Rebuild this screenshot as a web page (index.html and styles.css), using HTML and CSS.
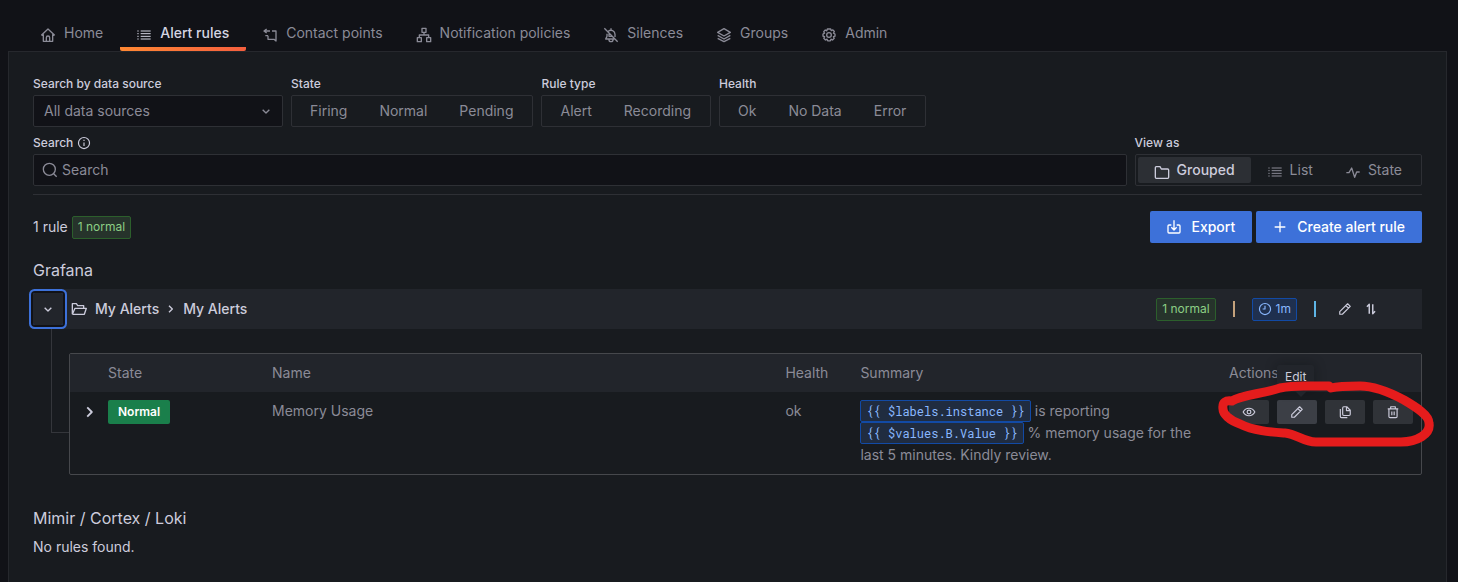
FILE: index.html
```html
<!DOCTYPE html>
<html lang="en">
<head>
<meta charset="utf-8">
<title>Alert rules</title>
<link rel="stylesheet" href="styles.css">
</head>
<body>
<svg class="sprite" aria-hidden="true">
  <symbol id="i-home" viewBox="0 0 24 24"><path d="M2 12.500 12 3l10 9.500M2 12.500h3M19 12.500h3M5 11v10.500h14V11M9.500 21v-5a2.500 2.500 0 0 1 5 0v5"/></symbol>
  <symbol id="i-list" viewBox="0 0 24 24"><path d="M7 6h15M7 10h15M7 14h15M7 18h15M2 6h2M2 10h2M2 14h2M2 18h2" stroke-width="1.500"/></symbol>
  <symbol id="i-contact" viewBox="0 0 24 24"><path d="M12 6H3M7 3 3 6l4 3M15 6h6v15l-3-2.500H9V13M5 13h4"/></symbol>
  <symbol id="i-tree" viewBox="0 0 24 24"><path d="M9 2h6v6H9zM2 16h6v6H2zM16 16h6v6h-6zM12 8v4M5 16v-4h14v4"/></symbol>
  <symbol id="i-silence" viewBox="0 0 24 24"><path d="M2 2l20 20M6 10v4l-2 4h13M8 6.500A6 6 0 0 1 18 11v4M12 2v3M9 19a3 3 0 0 0 6 0M9 9v5h5"/></symbol>
  <symbol id="i-layers" viewBox="0 0 24 24"><path d="M12 2.500 21.500 8 12 13.500 2.500 8zM2.500 12.500 12 18l9.500-5.500M2.500 17 12 22l9.500-5"/></symbol>
  <symbol id="i-gear" viewBox="0 0 24 24"><circle cx="12" cy="12" r="3.500"/><path d="M9.500 3h5l.8 2.500 2.500-1.200 2.200 2.500-1.300 2.500 2.300 1.200v3.200l-2.300.8 1.100 2.500-2.500 2.500-2.300-1.200-1 2.400h-4l-1-2.400-2.300 1.200-2.500-2.500 1.100-2.500-2.300-.8v-3.200l2.300-1.200-1.200-2.300 2.300-2.500 2.300 1.200z"/></symbol>
  <symbol id="i-down" viewBox="0 0 24 24"><path d="m7 10 5 5 5-5"/></symbol>
  <symbol id="i-right" viewBox="0 0 24 24"><path d="m9 7 5 5-5 5"/></symbol>
  <symbol id="i-info" viewBox="0 0 24 24"><circle cx="12" cy="12" r="9.500"/><path d="M12 11v6M12 6.500v2"/></symbol>
  <symbol id="i-search" viewBox="0 0 24 24"><circle cx="11" cy="11" r="9"/><path d="m17.500 17.500 4.500 4.500"/></symbol>
  <symbol id="i-folder" viewBox="0 0 24 24"><path d="M2 5.500A1.500 1.500 0 0 1 3.500 4H9l2 3.500h9.500A1.500 1.500 0 0 1 22 9v11a1.500 1.500 0 0 1-1.500 1.500h-17A1.500 1.500 0 0 1 2 20z"/></symbol>
  <symbol id="i-folder-open" viewBox="0 0 24 24"><path d="M2 20V4h6l2 3h9v3M2 20l4-9h17l-3 9H2"/></symbol>
  <symbol id="i-pulse" viewBox="0 0 24 24"><path d="M2 13h4l4-7 4.500 14L17.500 12H22"/></symbol>
  <symbol id="i-export" viewBox="0 0 24 24"><path d="M8 9H4.500A1.500 1.500 0 0 0 3 10.500v9A1.500 1.500 0 0 0 4.500 21h15a1.500 1.500 0 0 0 1.500-1.500v-9A1.500 1.500 0 0 0 19.500 9H16M12 2v14M8 12.500l4 4 4-4"/></symbol>
  <symbol id="i-plus" viewBox="0 0 24 24"><path d="M12 4v16M4 12h16"/></symbol>
  <symbol id="i-clock" viewBox="0 0 24 24"><circle cx="12" cy="12" r="9.500"/><path d="M12 6.500V12H8"/></symbol>
  <symbol id="i-pen" viewBox="0 0 24 24"><path d="M3 21v-4.500L16.500 3 21 7.500 7.500 21zM13.500 6l4.500 4.500"/></symbol>
  <symbol id="i-sort" viewBox="0 0 24 24"><path d="M9 20V4L5 8M15 4v16l4-4" stroke-width="2.500"/></symbol>
  <symbol id="i-eye" viewBox="0 0 24 24"><path d="M2 12c4.500-8.500 15.500-8.500 20 0-4.500 8.500-15.500 8.500-20 0z"/><circle cx="12" cy="12" r="3.200"/></symbol>
  <symbol id="i-copy" viewBox="0 0 24 24"><path d="M10 3h5l6 6v7a2 2 0 0 1-2 2h-9a2 2 0 0 1-2-2V5a2 2 0 0 1 2-2zM14.500 3v6.500H21M4 7v12.500a2 2 0 0 0 2 2h10"/></symbol>
  <symbol id="i-trash" viewBox="0 0 24 24"><path d="M3 6.500h18M8 6V3h8v3M5 7v12.500a2 2 0 0 0 2 2h10a2 2 0 0 0 2-2V7M10 11v6.500M14 11v6.500"/></symbol>
</svg>

<nav class="tabs" aria-label="Alerting">
  <a class="tab" href="#"><svg class="icon"><use href="#i-home"/></svg>Home</a>
  <a class="tab active" href="#" aria-current="page"><svg class="icon"><use href="#i-list"/></svg>Alert rules</a>
  <a class="tab" href="#"><svg class="icon"><use href="#i-contact"/></svg>Contact points</a>
  <a class="tab" href="#"><svg class="icon"><use href="#i-tree"/></svg>Notification policies</a>
  <a class="tab" href="#"><svg class="icon"><use href="#i-silence"/></svg>Silences</a>
  <a class="tab" href="#"><svg class="icon"><use href="#i-layers"/></svg>Groups</a>
  <a class="tab" href="#"><svg class="icon"><use href="#i-gear"/></svg>Admin</a>
</nav>

<main class="panel">
  <form class="filters">
    <div class="filter-row">
      <div class="field source">
        <label class="caption" for="source">Search by data source</label>
        <div class="select-box">
          <select id="source"><option>All data sources</option></select>
          <svg class="icon"><use href="#i-down"/></svg>
        </div>
      </div>
      <fieldset class="field">
        <legend class="caption">State</legend>
        <div class="radios">
          <label><input type="radio" name="state">Firing</label>
          <label><input type="radio" name="state">Normal</label>
          <label><input type="radio" name="state">Pending</label>
        </div>
      </fieldset>
      <fieldset class="field">
        <legend class="caption">Rule type</legend>
        <div class="radios">
          <label><input type="radio" name="type">Alert</label>
          <label><input type="radio" name="type">Recording</label>
        </div>
      </fieldset>
      <fieldset class="field">
        <legend class="caption">Health</legend>
        <div class="radios">
          <label><input type="radio" name="health">Ok</label>
          <label><input type="radio" name="health">No Data</label>
          <label><input type="radio" name="health">Error</label>
        </div>
      </fieldset>
    </div>
    <div class="filter-row">
      <div class="field grow">
        <label class="caption" for="search">Search <svg class="icon small"><use href="#i-info"/></svg></label>
        <div class="search-box">
          <svg class="icon"><use href="#i-search"/></svg>
          <input id="search" type="text" placeholder="Search">
        </div>
      </div>
      <fieldset class="field">
        <legend class="caption">View as</legend>
        <div class="radios">
          <label class="checked"><input type="radio" name="view" checked><svg class="icon"><use href="#i-folder"/></svg>Grouped</label>
          <label><input type="radio" name="view"><svg class="icon"><use href="#i-list"/></svg>List</label>
          <label><input type="radio" name="view"><svg class="icon"><use href="#i-pulse"/></svg>State</label>
        </div>
      </fieldset>
    </div>
  </form>

  <div class="toolbar">
    <span>1 rule</span>
    <span class="badge green">1 normal</span>
    <div class="buttons">
      <button class="primary" type="button"><svg class="icon"><use href="#i-export"/></svg>Export</button>
      <button class="primary" type="button"><svg class="icon"><use href="#i-plus"/></svg>Create alert rule</button>
    </div>
  </div>

  <section>
    <h2>Grafana</h2>
    <div class="group-header">
      <button class="collapse" type="button" aria-label="Collapse group"><svg class="icon"><use href="#i-down"/></svg></button>
      <svg class="icon folder"><use href="#i-folder-open"/></svg>
      <h3>My Alerts</h3>
      <svg class="icon crumb"><use href="#i-right"/></svg>
      <h3>My Alerts</h3>
      <div class="group-stats">
        <span class="badge green">1 normal</span>
        <span class="divider warm"></span>
        <span class="badge blue"><svg class="icon small"><use href="#i-clock"/></svg>1m</span>
        <span class="divider cool"></span>
        <span class="group-actions">
          <button class="plain" type="button" aria-label="Edit group"><svg class="icon small"><use href="#i-pen"/></svg></button>
          <button class="plain" type="button" aria-label="Reorder rules"><svg class="icon small"><use href="#i-sort"/></svg></button>
        </span>
      </div>
    </div>

    <div class="group-body">
      <div class="guide"></div>
      <div class="table-frame">
        <table>
          <colgroup><col class="c-expand"><col class="c-state"><col class="c-name"><col class="c-health"><col><col class="c-actions"></colgroup>
          <thead>
            <tr><th></th><th>State</th><th>Name</th><th>Health</th><th>Summary</th><th>Actions</th></tr>
          </thead>
          <tbody>
            <tr>
              <td class="expand-cell"><button class="plain" type="button" aria-label="Expand rule"><svg class="icon large"><use href="#i-right"/></svg></button></td>
              <td><span class="state-tag">Normal</span></td>
              <td>Memory Usage</td>
              <td>ok</td>
              <td class="summary"><code>{{ $labels.instance }}</code> is reporting <code>{{ $values.B.Value }}</code> % memory usage for the last 5 minutes. Kindly review.</td>
              <td>
                <div class="actions">
                  <button type="button" aria-label="View"><svg class="icon small"><use href="#i-eye"/></svg></button>
                  <button class="hover" type="button" aria-describedby="tip" aria-label="Edit rule"><svg class="icon small"><use href="#i-pen"/></svg><span class="tooltip" id="tip" role="tooltip">Edit</span></button>
                  <button type="button" aria-label="Copy"><svg class="icon small"><use href="#i-copy"/></svg></button>
                  <button type="button" aria-label="Delete"><svg class="icon small"><use href="#i-trash"/></svg></button>
                </div>
              </td>
            </tr>
          </tbody>
        </table>
        <svg class="marker" viewBox="0 0 220 70" aria-hidden="true"><path d="M18 20C27 14 48 13 66 7Q76 5 90 5H115L117 7Q125 5 146 5C160 5 177 12 190 19C202 26 215 34 215 42C217 53 203 61 187 61H102C89 61 83 53 71 52C57 51 40 50 26 43C15 39 9 33 9 28C8 21 12 19 18 20"/></svg>
      </div>
    </div>
  </section>

  <section class="external">
    <h2>Mimir / Cortex / Loki</h2>
    <p>No rules found.</p>
  </section>
</main>
</body>
</html>
```
FILE: styles.css
```css
* { box-sizing: border-box; }

body {
  margin: 0;
  min-height: 100vh;
  display: flex;
  flex-direction: column;
  background: #111217;
  color: #ccccdc;
  font: 14px/22px Inter, "Liberation Sans", sans-serif;
}

button, input, select { font: inherit; color: inherit; }
button { padding: 0; border: 0; background: none; cursor: pointer; }
h2, h3, p { margin: 0; font-weight: 400; }
h2 { font-size: 16px; line-height: 22px; }
h3 { font-size: 14px; font-weight: 500; }

.sprite { display: none; }

.icon {
  width: 16px;
  height: 16px;
  flex: none;
  fill: none;
  stroke: currentColor;
  stroke-width: 2;
  stroke-linejoin: round;
}
.icon.small { width: 14px; height: 14px; }
.icon.large { width: 22px; height: 22px; }

.tabs { display: flex; padding: 16px 24px 0; }
.tab {
  display: flex;
  align-items: center;
  gap: 8px;
  height: 35px;
  padding: 0 17px 2px 16px;
  color: #8b8b97;
  text-decoration: none;
}
.tab .icon { margin-top: 5px; }
.tab.active {
  color: #d5d5e2;
  font-weight: 500;
  background: linear-gradient(90deg, #ff8833, #f55f3e) bottom / 100% 4px no-repeat;
  border-radius: 2px;
}

.panel {
  flex: 1;
  margin: 0 11px 0 8px;
  padding: 24px;
  background: #181b1f;
  border: 1px solid #26282d;
  border-bottom: 0;
}

.filters {
  display: flex;
  flex-direction: column;
  gap: 8px;
  padding-bottom: 8px;
  border-bottom: 1px solid #2e3035;
}
.filter-row { display: flex; gap: 8px; }
.field { min-width: 0; margin: 0; padding: 0; border: 0; }
.source { width: 250px; }
.grow { flex: 1; }
.caption {
  display: flex;
  align-items: center;
  gap: 4px;
  height: 19px;
  padding: 0 0 3px;
  font-size: 12px;
  line-height: 16px;
  font-weight: 500;
}
.select-box, .search-box {
  display: flex;
  align-items: center;
  height: 32px;
  background: #111217;
  border: 1px solid #2e3035;
  border-radius: 2px;
  color: #8b8b97;
}
.select-box { padding-right: 8px; }
.select-box select {
  flex: 1;
  appearance: none;
  border: 0;
  background: none;
  padding: 0 10px;
}
.search-box { padding-left: 8px; gap: 4px; }
.search-box input {
  flex: 1;
  min-width: 0;
  padding: 0;
  border: 0;
  background: none;
}
.search-box input::placeholder { color: #8b8b97; opacity: 1; }

.radios {
  display: flex;
  height: 32px;
  padding: 2px 3px 2px 2px;
  border: 1px solid #2e3035;
  border-radius: 2px;
  color: #8b8b97;
}
.radios label {
  display: flex;
  align-items: center;
  padding: 0 16px;
  border-radius: 2px;
}
.radios input { appearance: none; width: 0; height: 0; margin: 0; }
.radios .icon { margin: 3px 7px 0 0; }
.radios .checked { background: #2c2f34; color: #ccccdc; font-weight: 500; }

.toolbar { display: flex; align-items: center; gap: 4px; margin-top: 16px; }
.buttons { display: flex; gap: 4px; margin-left: auto; }
.primary {
  display: flex;
  align-items: center;
  gap: 9px;
  height: 32px;
  padding: 0 17px 0 16px;
  background: #3d71d9;
  border-radius: 2px;
  color: #fff;
  font-weight: 500;
}

.badge {
  display: flex;
  align-items: center;
  gap: 4px;
  height: 23px;
  padding: 0 5px;
  border: 1px solid;
  border-radius: 2px;
  font-size: 12px;
}
.green { background: #26332b; border-color: #2c5f2c; color: #8ccf85; }
.blue { background: #1f304f; border-color: #124aa5; color: #8ab8ff; }

section > h2 { margin-top: 16px; }
.group-header {
  display: flex;
  align-items: center;
  height: 40px;
  margin-top: 8px;
  background: #22252b;
}
.collapse {
  display: grid;
  place-items: center;
  width: 30px;
  height: 32px;
  border-radius: 2px;
  box-shadow: 0 0 0 2px #111217, 0 0 0 4px #3d71d9;
}
.folder { margin: 0 8px; }
.crumb { margin: 0 4px; }
.group-stats { display: flex; align-items: center; margin-left: auto; padding-right: 44px; }
.divider { width: 2px; height: 16px; margin: 0 17px; }
.warm { background: #c4a27c; }
.cool { background: #5eb5e6; }
.group-actions { display: flex; gap: 12px; padding-left: 5px; }
.plain { display: grid; place-items: center; }

.group-body { display: flex; }
.guide {
  width: 18px;
  height: 104px;
  margin-left: 18px;
  border: solid #34363b;
  border-width: 0 0 1px 1px;
}
.table-frame {
  position: relative;
  flex: 1;
  min-width: 0;
  margin-top: 24px;
  border: 1px solid #46484c;
  border-radius: 2px;
}
table { width: 100%; table-layout: fixed; border-collapse: collapse; color: #8b8b97; }
.c-expand { width: 30px; }
.c-state { width: 164px; }
.c-name { width: 38%; }
.c-health { width: 75px; }
.c-actions { width: 200px; }
th { height: 38px; padding: 0 8px; text-align: left; font-weight: 400; background: #22252b; }
td { padding: 8px; vertical-align: top; }
.expand-cell { padding-left: 9px; color: #ccccdc; }
.expand-cell button { height: 24px; }
.state-tag {
  display: inline-block;
  padding: 1px 10px;
  background: #1a7f4b;
  border-radius: 2px;
  color: #fff;
  font-size: 12px;
  font-weight: 600;
}
code {
  display: inline-block;
  padding: 0 5px;
  background: #202c40;
  border: 1px solid #124aa5;
  border-radius: 2px;
  color: #8ab8ff;
  font: 12px/20px "Roboto Mono", "DejaVu Sans Mono", monospace;
  white-space: nowrap;
}
.actions { display: flex; gap: 8px; }
.actions button {
  position: relative;
  display: grid;
  place-items: center;
  width: 40px;
  height: 24px;
  background: #303338;
  border-radius: 2px;
  color: #ccccdc;
}
.actions .hover { background: #3c3f46; }
.tooltip {
  position: absolute;
  bottom: 100%;
  left: 0;
  margin-bottom: 11px;
  padding: 1px 8px;
  background: #22252b;
  border-radius: 2px;
  box-shadow: 0 0 12px rgba(10, 12, 16, 0.4);
  font-size: 12px;
}
.tooltip::after {
  content: "";
  position: absolute;
  top: 100%;
  left: 50%;
  margin-left: -3px;
  border: 8px solid transparent;
  border-top-color: #22252b;
}
.marker {
  position: absolute;
  top: 27px;
  right: -13px;
  width: 220px;
  height: 70px;
  fill: none;
  stroke: #e51c1c;
  stroke-width: 9;
  stroke-linecap: round;
  stroke-linejoin: round;
  pointer-events: none;
}

.external { margin-top: 32px; }
.external p { margin-top: 7px; }
```
